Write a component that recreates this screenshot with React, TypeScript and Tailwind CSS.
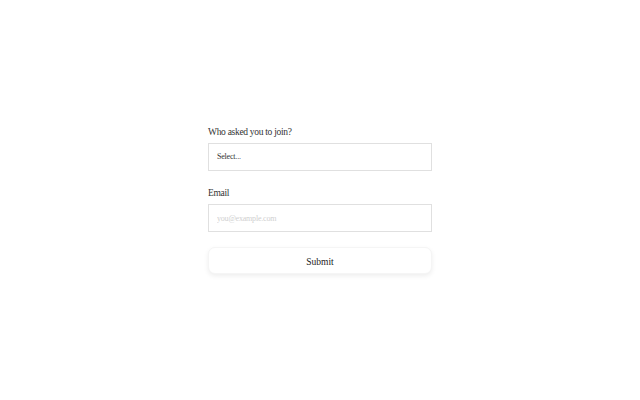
import React from "react";

export default function App() {
  const font = { fontFamily: '"Liberation Serif", "DejaVu Serif", serif' };
  return (
    <div className="w-[640px] h-[400px] bg-white flex items-center justify-center" style={font}>
      <form className="w-[224px] flex flex-col" onSubmit={(e) => e.preventDefault()}>
        <label className="text-[9.5px] leading-[13px] text-[#333] mb-[4px] tracking-[-0.3px]">Who asked you to join?</label>
        <div className="h-[28px] border border-[#e0e0e0] flex items-center px-[8px] text-[8px] text-[#333] tracking-[-0.2px]">Select...</div>
        <label className="text-[9.5px] leading-[13px] text-[#333] mt-[16px] mb-[4px] tracking-[-0.3px]">Email</label>
        <input
          className="h-[28px] border border-[#e0e0e0] px-[8px] text-[8px] text-[#444] placeholder:text-[#d0d0d0] outline-none tracking-[-0.2px]"
          placeholder="you@example.com"
          style={font}
        />
        <button
          type="submit"
          className="mt-[15px] h-[27px] rounded-[7px] bg-white text-[9.5px] leading-[26px] pt-[1px] text-[#222] shadow-[0_2px_5px_rgba(0,0,0,0.07)] border border-[#f5f5f5]"
          style={font}
        >
          Submit
        </button>
      </form>
    </div>
  );
}
